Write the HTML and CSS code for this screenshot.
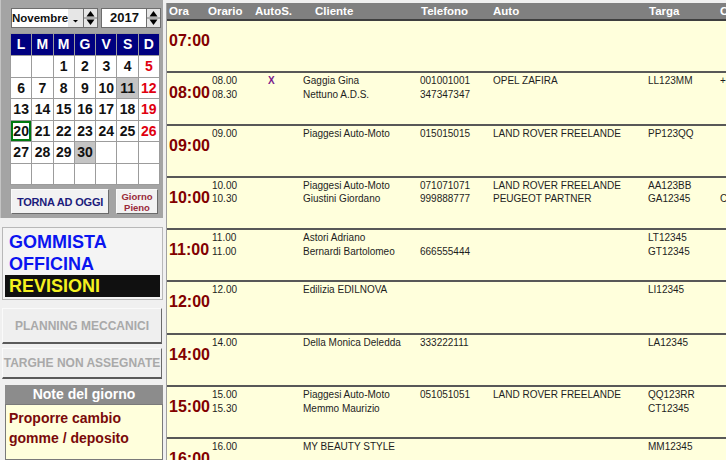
FILE: index.html
```html
<!DOCTYPE html>
<html lang="it">
<head>
    <meta charset="UTF-8">
    <title>Planning Officina</title>
    <link rel="stylesheet" href="styles.css">
</head>
<body>
    <aside class="sidebar">
        <div class="cal-panel">
            <div class="cal-top">
                <div class="field month-field">Novembre</div>
                <div class="drop-btn">
                    <svg width="15" height="20" viewBox="0 0 15 20"><polygon points="5,12 10,12 7.5,14.5" fill="#000"/></svg>
                </div>
                <div class="spin">
                    <svg width="15" height="20" viewBox="0 0 15 20"><polygon points="3.5,8.5 11.5,8.5 7.5,3" fill="#000"/><line x1="1" y1="10" x2="14" y2="10" stroke="#777"/><polygon points="3.5,11.5 11.5,11.5 7.5,17" fill="#000"/></svg>
                </div>
                <div class="field year-field">2017</div>
                <div class="spin">
                    <svg width="15" height="20" viewBox="0 0 15 20"><polygon points="3.5,8.5 11.5,8.5 7.5,3" fill="#000"/><line x1="1" y1="10" x2="14" y2="10" stroke="#777"/><polygon points="3.5,11.5 11.5,11.5 7.5,17" fill="#000"/></svg>
                </div>
            </div>

            <div class="cal-grid">
                <div class="dow">L</div><div class="dow">M</div><div class="dow">M</div><div class="dow">G</div><div class="dow">V</div><div class="dow">S</div><div class="dow">D</div>
                <div class="day"></div><div class="day"></div><div class="day">1</div><div class="day">2</div><div class="day">3</div><div class="day">4</div><div class="day sun">5</div>
                <div class="day">6</div><div class="day">7</div><div class="day">8</div><div class="day">9</div><div class="day">10</div><div class="day busy">11</div><div class="day sun">12</div>
                <div class="day">13</div><div class="day">14</div><div class="day">15</div><div class="day">16</div><div class="day">17</div><div class="day">18</div><div class="day sun">19</div>
                <div class="day today">20</div><div class="day">21</div><div class="day">22</div><div class="day">23</div><div class="day">24</div><div class="day">25</div><div class="day sun">26</div>
                <div class="day">27</div><div class="day">28</div><div class="day">29</div><div class="day busy">30</div><div class="day"></div><div class="day"></div><div class="day"></div>
                <div class="day"></div><div class="day"></div><div class="day"></div><div class="day"></div><div class="day"></div><div class="day"></div><div class="day"></div>
            </div>

            <div class="cal-buttons">
                <button class="btn btn-today">TORNA AD OGGI</button>
                <button class="btn btn-full">Giorno<br>Pieno</button>
            </div>
        </div>

        <div class="mode-box">
            <div class="mode">GOMMISTA</div>
            <div class="mode">OFFICINA</div>
            <div class="mode mode-active">REVISIONI</div>
        </div>

        <button class="btn btn-wide btn-planning">PLANNING MECCANICI</button>
        <button class="btn btn-wide btn-targhe">TARGHE NON ASSEGNATE</button>

        <div class="note-head">Note del giorno</div>
        <div class="note-body">Proporre cambio<br>gomme / deposito</div>
    </aside>

    <main class="schedule">
        <div class="sched-head">
            <div class="h-ora">Ora</div>
            <div class="h-orario">Orario</div>
            <div class="h-autos">AutoS.</div>
            <div class="h-cliente">Cliente</div>
            <div class="h-tel">Telefono</div>
            <div class="h-auto">Auto</div>
            <div class="h-targa">Targa</div>
            <div class="h-extra">C</div>
        </div>

        <div class="hour-row">
            <div class="hour-label">07:00</div>
            <div class="entries"></div>
        </div>

        <div class="hour-row">
            <div class="hour-label">08:00</div>
            <div class="entries">
                <div class="entry"><span class="c-time">08.00</span><span class="c-autos">X</span><span>Gaggia Gina</span><span>001001001</span><span>OPEL ZAFIRA</span><span>LL123MM</span><span>+</span></div>
                <div class="entry"><span class="c-time">08.30</span><span class="c-autos"></span><span>Nettuno A.D.S.</span><span>347347347</span><span></span><span></span><span></span></div>
            </div>
        </div>

        <div class="hour-row">
            <div class="hour-label">09:00</div>
            <div class="entries">
                <div class="entry"><span class="c-time">09.00</span><span class="c-autos"></span><span>Piaggesi Auto-Moto</span><span>015015015</span><span>LAND ROVER FREELANDE</span><span>PP123QQ</span><span></span></div>
            </div>
        </div>

        <div class="hour-row">
            <div class="hour-label">10:00</div>
            <div class="entries">
                <div class="entry"><span class="c-time">10.00</span><span class="c-autos"></span><span>Piaggesi Auto-Moto</span><span>071071071</span><span>LAND ROVER FREELANDE</span><span>AA123BB</span><span></span></div>
                <div class="entry"><span class="c-time">10.30</span><span class="c-autos"></span><span>Giustini Giordano</span><span>999888777</span><span>PEUGEOT PARTNER</span><span>GA12345</span><span>C</span></div>
            </div>
        </div>

        <div class="hour-row">
            <div class="hour-label">11:00</div>
            <div class="entries">
                <div class="entry"><span class="c-time">11.00</span><span class="c-autos"></span><span>Astori Adriano</span><span></span><span></span><span>LT12345</span><span></span></div>
                <div class="entry"><span class="c-time">11.00</span><span class="c-autos"></span><span>Bernardi Bartolomeo</span><span>666555444</span><span></span><span>GT12345</span><span></span></div>
            </div>
        </div>

        <div class="hour-row">
            <div class="hour-label">12:00</div>
            <div class="entries">
                <div class="entry"><span class="c-time">12.00</span><span class="c-autos"></span><span>Edilizia EDILNOVA</span><span></span><span></span><span>LI12345</span><span></span></div>
            </div>
        </div>

        <div class="hour-row">
            <div class="hour-label">14:00</div>
            <div class="entries">
                <div class="entry"><span class="c-time">14.00</span><span class="c-autos"></span><span>Della Monica Deledda</span><span>333222111</span><span></span><span>LA12345</span><span></span></div>
            </div>
        </div>

        <div class="hour-row">
            <div class="hour-label">15:00</div>
            <div class="entries">
                <div class="entry"><span class="c-time">15.00</span><span class="c-autos"></span><span>Piaggesi Auto-Moto</span><span>051051051</span><span>LAND ROVER FREELANDE</span><span>QQ123RR</span><span></span></div>
                <div class="entry"><span class="c-time">15.30</span><span class="c-autos"></span><span>Memmo Maurizio</span><span></span><span></span><span>CT12345</span><span></span></div>
            </div>
        </div>

        <div class="hour-row">
            <div class="hour-label">16:00</div>
            <div class="entries">
                <div class="entry"><span class="c-time">16.00</span><span class="c-autos"></span><span>MY BEAUTY STYLE</span><span></span><span></span><span>MM12345</span><span></span></div>
            </div>
        </div>
    </main>
</body>
</html>
```

FILE: styles.css
```css
body {
    margin: 0;
    width: 726px;
    height: 460px;
    overflow: hidden;
    display: flex;
    background: #f0f0f0;
    font-family: "Liberation Sans", Arial, sans-serif;
}

/* ---- left column ---- */

.sidebar {
    width: 163px;
    flex-shrink: 0;
    display: flex;
    flex-direction: column;
}

.cal-panel {
    height: 218px;
    box-sizing: border-box;
    padding: 8px 0 0 10px;
    background: #a4a4a4;
    border-left: 1px solid #c4c4c4;
}

.cal-top {
    display: flex;
    height: 20px;
    margin-bottom: 5px;
}

.field {
    box-sizing: border-box;
    height: 20px;
    background: #fff;
    border: 1px solid #6e6e6e;
    font-weight: bold;
    line-height: 18px;
    color: #111;
    white-space: nowrap;
    overflow: hidden;
}

.month-field {
    width: 57px;
    padding-left: 0;
    border-right: none;
    font-size: 11.5px;
}

.year-field {
    width: 45px;
    margin-left: 3px;
    padding-left: 8px;
    border-right: none;
    font-size: 13px;
}

.drop-btn, .spin {
    width: 15px;
    height: 20px;
    background: #e6e6e6;
    box-sizing: border-box;
}

.drop-btn {
    border-top: 1px solid #6e6e6e;
    border-bottom: 1px solid #6e6e6e;
}

.drop-btn svg, .spin svg {
    display: block;
    margin-top: -1px;
}

.spin {
    border: 1px solid #6e6e6e;
}

.spin svg {
    margin-left: -1px;
}

.cal-grid {
    width: 148px;
    display: grid;
    grid-template-columns: repeat(7, 1fr);
    grid-template-rows: 21px repeat(6, 20.5px);
    gap: 1px;
    background: #9c9c9c;
    border: 1px solid #9c9c9c;
    margin-left: -1px;
    margin-bottom: 4px;
}

.dow {
    background: #000080;
    color: #fff;
    font-size: 14px;
    font-weight: bold;
    text-align: center;
    line-height: 21px;
}

.day {
    background: #fff;
    color: #111;
    font-size: 14px;
    font-weight: bold;
    text-align: center;
    line-height: 20px;
}

.day.sun {
    color: #e00010;
}

.day.busy {
    background: #c4c4c4;
}

.day.today {
    box-shadow: inset 0 0 0 2px #007a10;
}

.cal-buttons {
    display: flex;
    gap: 7px;
}

.btn {
    font-family: "Liberation Sans", Arial, sans-serif;
    font-weight: bold;
    background: #f2f2f2;
    border: 1px solid #fafafa;
    border-right-color: #6a6a6a;
    border-bottom-color: #6a6a6a;
    padding: 0;
    white-space: nowrap;
    cursor: pointer;
}

.btn-today {
    width: 98px;
    height: 25px;
    font-size: 11px;
    letter-spacing: -0.2px;
    color: #1c1c7c;
}

.btn-full {
    width: 42px;
    height: 25px;
    font-size: 9.5px;
    line-height: 11px;
    color: #9a2a3a;
}

.mode-box {
    margin: 9px 0 0 2px;
    height: 73px;
    box-sizing: border-box;
    padding: 3px 2px 0 2px;
    border: 1px solid #b8b8b8;
    background: #f4f4f4;
}

.mode {
    font-size: 18px;
    font-weight: bold;
    line-height: 22px;
    color: #0a14f0;
    padding-left: 4px;
}

.mode-active {
    background: #101010;
    color: #f4f020;
}

.btn-wide {
    display: block;
    width: 160px;
    margin-left: 2px;
    font-size: 12px;
    color: #a9a9a9;
    background: #efefef;
    border-color: #fafafa #6a6a6a #5a5a5a #fafafa;
    border-width: 1px 1px 2px 1px;
}

.btn-planning {
    margin-top: 8px;
    height: 36px;
}

.btn-targhe {
    margin-top: 4px;
    height: 31px;
}

.note-head {
    margin: 6px 0 0 5px;
    height: 19px;
    background: #8c8c8c;
    color: #fff;
    font-size: 14px;
    font-weight: bold;
    line-height: 19px;
    text-align: center;
}

.note-body {
    flex: 1;
    margin-left: 5px;
    padding: 3px 0 0 3px;
    background: #ffffdc;
    border: 1px solid #7a7a7a;
    color: #7a0a0a;
    font-size: 14px;
    font-weight: bold;
    line-height: 20px;
}

/* ---- planning grid ---- */

.schedule {
    flex: 1;
    min-width: 0;
    margin: 3px 0 0 3px;
    border-left: 1px solid #a0a0a0;
    background: #ffffdc;
    white-space: nowrap;
}

.sched-head {
    display: grid;
    grid-template-columns: 41px 42px 53px 117px 73px 155px 72px 1fr;
    height: 16px;
    background: #808080;
    border-bottom: 2px solid #3e3e3e;
    color: #fff;
    font-size: 11.5px;
    font-weight: bold;
    line-height: 16px;
}

.h-ora { padding-left: 2px; }
.h-orario { padding-left: 0; }
.h-autos { padding-left: 5px; }
.h-cliente { padding-left: 12px; }
.h-tel { padding-left: 1px; }
.h-targa { padding-left: 1px; }

.hour-row {
    display: flex;
    height: 50.3px;
    border-bottom: 2px solid #585858;
}

.hour-label {
    width: 41px;
    flex-shrink: 0;
    box-sizing: border-box;
    padding: 11px 0 0 2px;
    font-size: 16px;
    font-weight: bold;
    line-height: 18px;
    color: #820000;
}

.entries {
    flex: 1;
    padding-top: 1px;
}

.entry {
    display: grid;
    grid-template-columns: 42px 53px 117px 73px 155px 72px 1fr;
    font-size: 10px;
    line-height: 13.5px;
    color: #1e1e1e;
}

.c-time {
    padding-left: 4px;
}

.c-autos {
    padding-left: 18px;
    color: #7a1a8a;
    font-weight: bold;
}
```
